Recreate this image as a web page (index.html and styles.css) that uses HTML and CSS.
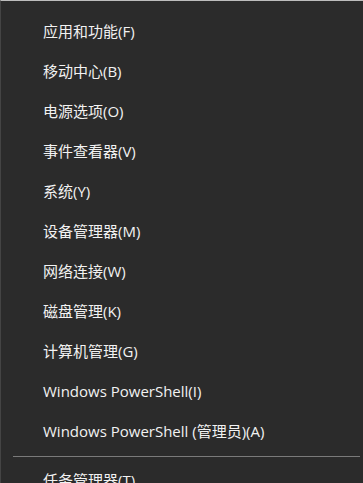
FILE: index.html
```html
<!DOCTYPE html>
<html lang="zh-CN">
<head>
<meta charset="utf-8">
<link rel="stylesheet" href="styles.css">
</head>
<body>
<div class="menu">
  <ul class="group">
    <li class="item">应用和功能(F)</li>
    <li class="item">移动中心(B)</li>
    <li class="item">电源选项(O)</li>
    <li class="item">事件查看器(V)</li>
    <li class="item">系统(Y)</li>
    <li class="item">设备管理器(M)</li>
    <li class="item">网络连接(W)</li>
    <li class="item">磁盘管理(K)</li>
    <li class="item">计算机管理(G)</li>
    <li class="item">Windows PowerShell(I)</li>
    <li class="item">Windows PowerShell (管理员)(A)</li>
  </ul>
  <div class="sep"></div>
  <ul class="group">
    <li class="item">任务管理器(T)</li>
  </ul>
</div>
</body>
</html>
```
FILE: styles.css
```css
html, body {
  margin: 0;
  padding: 0;
  background: #2b2b2b;
  height: 100%;
  overflow: hidden;
}
.menu {
  box-sizing: border-box;
  height: 483px;
  background: #2b2b2b;
  border-top: 1px solid #bdbdbd;
  border-left: 1px solid #444444;
  padding-top: 10px;
  font-family: "Open Sans", "Noto Sans CJK SC", sans-serif;
  font-size: 15px;
  color: #f2f2f2;
}
.group {
  list-style: none;
  margin: 0;
  padding: 0;
}
.item {
  height: 40px;
  line-height: 40px;
  padding-left: 42px;
  white-space: nowrap;
}
.sep {
  height: 1px;
  background: #7a7a7a;
  margin: 5px 3px 3px 12px;
}
```
